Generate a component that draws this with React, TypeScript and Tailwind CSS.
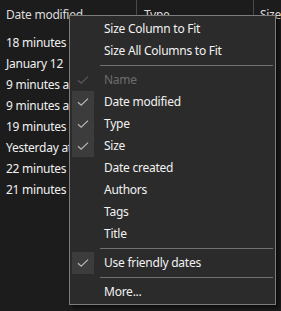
import React from 'react';

const FILES = [
  '18 minutes ago',
  'January 12',
  '9 minutes ago',
  '9 minutes ago',
  '19 minutes ago',
  'Yesterday at 4:12 PM',
  '22 minutes ago',
  '21 minutes ago',
];

type Item =
  | { kind: 'sep' }
  | { kind: 'item'; label: string; checked?: boolean; disabled?: boolean };

const ITEMS: Item[] = [
  { kind: 'item', label: 'Size Column to Fit' },
  { kind: 'item', label: 'Size All Columns to Fit' },
  { kind: 'sep' },
  { kind: 'item', label: 'Name', checked: true, disabled: true },
  { kind: 'item', label: 'Date modified', checked: true },
  { kind: 'item', label: 'Type', checked: true },
  { kind: 'item', label: 'Size', checked: true },
  { kind: 'item', label: 'Date created' },
  { kind: 'item', label: 'Authors' },
  { kind: 'item', label: 'Tags' },
  { kind: 'item', label: 'Title' },
  { kind: 'sep' },
  { kind: 'item', label: 'Use friendly dates', checked: true },
  { kind: 'sep' },
  { kind: 'item', label: 'More...' },
];

const Check = ({ dim }: { dim?: boolean }) => (
  <svg width="12" height="10" viewBox="0 0 12 10" fill="none">
    <path d="M1 5.2 L4.2 8.2 L11 1.6" stroke={dim ? '#5a5a5a' : '#b8b8b8'} strokeWidth="1.2" />
  </svg>
);

export default function App() {
  return (
    <div
      className="relative w-[281px] h-[311px] bg-[#1c1c1c] overflow-hidden text-[12px] tracking-[-0.25px] text-[#f0f0f0]"
      style={{ fontFamily: '"Noto Sans", "Open Sans", sans-serif' }}
    >
      {/* column header */}
      <div className="flex h-[32px] items-start text-[#dcdcdc]">
        <div className="w-[143px] pl-[6px] pt-[6px] border-r border-[#4a4a4a] h-[14px] box-content">Date modified</div>
        <div className="w-[120px] pl-[7px] pt-[6px] border-r border-[#4a4a4a] h-[14px] box-content">Type</div>
        <div className="pl-[6px] pt-[6px]">Size</div>
      </div>
      <div className="flex flex-col pl-[6px]">
        {FILES.map((f, i) => (
          <div key={i} className="h-[21px] leading-[21px] whitespace-nowrap">{f}</div>
        ))}
      </div>

      {/* context menu */}
      <div className="absolute left-[69px] top-[15px] w-[207px] h-[290px] bg-[#2b2b2b] border border-[#7c7c7c] shadow-[3px_3px_4px_rgba(0,0,0,0.6)] pt-[2px] px-[2px]">
        {ITEMS.map((it, i) =>
          it.kind === 'sep' ? (
            <div key={i} className="h-[7px] flex items-center pl-[28px]">
              <div className="h-px w-full bg-[#707070]" />
            </div>
          ) : (
            <div key={i} className="flex h-[22px] items-center">
              <div
                className={`w-[22px] h-[22px] flex items-center justify-center ${
                  it.checked && !it.disabled ? 'bg-[#3c3c3c]' : ''
                }`}
              >
                {it.checked && <Check dim={it.disabled} />}
              </div>
              <span className={`ml-[10px] whitespace-nowrap ${it.disabled ? 'text-[#6d6d6d]' : 'text-[#f2f2f2]'}`}>
                {it.label}
              </span>
            </div>
          )
        )}
      </div>
    </div>
  );
}
